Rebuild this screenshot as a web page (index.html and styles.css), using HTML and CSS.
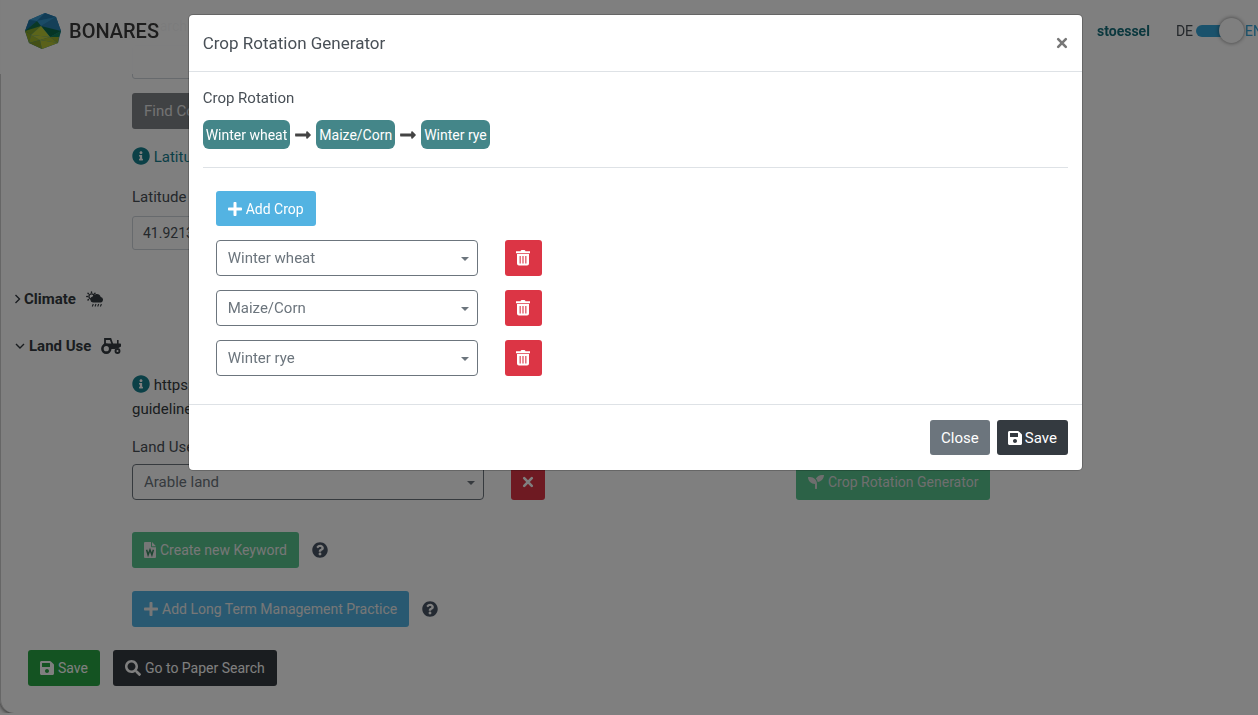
FILE: index.html
```
<!DOCTYPE html>
<html lang="en">
<head>
<meta charset="utf-8">
<title>BONARES - Crop Rotation Generator</title>
<link rel="stylesheet" href="styles.css">
</head>
<body>
<svg class="defs" aria-hidden="true">
  <symbol id="plus" viewBox="0 0 448 512"><path d="M416 208H272V64c0-17.67-14.33-32-32-32h-32c-17.67 0-32 14.33-32 32v144H32c-17.67 0-32 14.33-32 32v32c0 17.67 14.33 32 32 32h144v144c0 17.67 14.33 32 32 32h32c17.67 0 32-14.33 32-32V304h144c17.67 0 32-14.33 32-32v-32c0-17.67-14.33-32-32-32z"/></symbol>
  <symbol id="save" viewBox="0 0 448 512"><path d="M433.941 129.941l-83.882-83.882A48 48 0 0 0 316.118 32H48C21.49 32 0 53.49 0 80v352c0 26.51 21.49 48 48 48h352c26.51 0 48-21.49 48-48V163.882a48 48 0 0 0-14.059-33.941zM224 416c-35.346 0-64-28.654-64-64 0-35.346 28.654-64 64-64s64 28.654 64 64c0 35.346-28.654 64-64 64zm96-304.52V212c0 6.627-5.373 12-12 12H76c-6.627 0-12-5.373-12-12V108c0-6.627 5.373-12 12-12h228.52c3.183 0 6.235 1.264 8.485 3.515l3.48 3.48A11.996 11.996 0 0 1 320 111.48z"/></symbol>
  <symbol id="search" viewBox="0 0 512 512"><path d="M505 442.7L405.3 343c-4.5-4.5-10.6-7-17-7H372c27.6-35.3 44-79.7 44-128C416 93.1 322.9 0 208 0S0 93.1 0 208s93.1 208 208 208c48.3 0 92.7-16.4 128-44v16.3c0 6.4 2.5 12.5 7 17l99.7 99.7c9.4 9.4 24.6 9.4 33.9 0l28.3-28.3c9.4-9.4 9.4-24.6.1-34zM208 336c-70.7 0-128-57.2-128-128 0-70.7 57.2-128 128-128 70.7 0 128 57.2 128 128 0 70.7-57.2 128-128 128z"/></symbol>
  <symbol id="info" viewBox="0 0 512 512"><path d="M256 8C119.043 8 8 119.083 8 256c0 136.997 111.043 248 248 248s248-111.003 248-248C504 119.083 392.957 8 256 8zm0 110c23.196 0 42 18.804 42 42s-18.804 42-42 42-42-18.804-42-42 18.804-42 42-42zm56 254c0 6.627-5.373 12-12 12h-88c-6.627 0-12-5.373-12-12v-24c0-6.627 5.373-12 12-12h12v-64h-12c-6.627 0-12-5.373-12-12v-24c0-6.627 5.373-12 12-12h64c6.627 0 12 5.373 12 12v100h12c6.627 0 12 5.373 12 12v24z"/></symbol>
  <symbol id="help" viewBox="0 0 512 512"><path d="M504 256c0 136.997-111.043 248-248 248S8 392.997 8 256C8 119.083 119.043 8 256 8s248 111.083 248 248zM262.655 90c-54.497 0-89.255 22.957-116.549 63.758-3.536 5.286-2.353 12.415 2.715 16.258l34.699 26.31c5.205 3.947 12.621 3.008 16.665-2.122 17.864-22.658 30.113-35.797 57.303-35.797 20.429 0 45.698 13.148 45.698 32.958 0 14.976-12.363 22.667-32.534 33.976C247.128 238.528 216 254.941 216 296v4c0 6.627 5.373 12 12 12h56c6.627 0 12-5.373 12-12v-1.333c0-28.462 83.186-29.647 83.186-106.667 0-58.002-60.165-102-116.531-102zM256 338c-25.365 0-46 20.635-46 46 0 25.364 20.635 46 46 46s46-20.636 46-46c0-25.365-20.635-46-46-46z"/></symbol>
  <symbol id="seedling" viewBox="0 0 512 512"><path d="M64 96H0c0 123.7 100.3 224 224 224v144c0 8.8 7.2 16 16 16h32c8.8 0 16-7.2 16-16V320C288 196.3 187.7 96 64 96zm384-64c-84.2 0-157.4 46.5-195.7 115.2 27.7 30.2 48.2 66.9 59 107.6C424 243.1 512 147.9 512 32h-64z"/></symbol>
  <symbol id="arrow" viewBox="0 0 448 512"><path d="M313.941 216H12c-6.627 0-12 5.373-12 12v56c0 6.627 5.373 12 12 12h301.941v46.059c0 21.382 25.851 32.09 40.971 16.971l86.059-86.059c9.373-9.373 9.373-24.569 0-33.941l-86.059-86.059c-15.119-15.119-40.971-4.411-40.971 16.971V216z"/></symbol>
  <symbol id="times" viewBox="0 0 12 12"><path d="M2.200 2.200l7.600 7.600M9.800 2.200L2.200 9.800" fill="none" stroke="currentColor" stroke-width="2.600" stroke-linecap="round"/></symbol>
  <symbol id="trash" viewBox="0 0 14 16"><path fill-rule="evenodd" d="M4.500 1.200Q4.700 0 6 0h2q1.300 0 1.500 1.200H14v2H0v-2zM1 4h12v9.500q0 2-2 2H3q-2 0-2-2zM3.600 6v7.500h1.100V6zM6.450 6v7.500h1.100V6zM9.300 6v7.500h1.100V6z"/></symbol>
  <symbol id="word" viewBox="0 0 12 16"><path d="M1 0h6v4.500q0 .8.800.8H12V15q0 1-1 1H1q-1 0-1-1V1q0-1 1-1zM8 0l4 4.200H8z"/><path class="word-mark" d="M2.600 7.800l1.500 5 1.900-5 1.900 5 1.500-5"/></symbol>
  <symbol id="caret" viewBox="0 0 8 4"><path d="M0 0h8L4 4z"/></symbol>
</svg>

<header class="topbar">
  <a class="brand" href="#">
    <svg class="brand-logo" viewBox="0 0 36 36" aria-hidden="true">
      <path fill="#2b87bd" d="M4 7L20 0l11 4 5 14-3 12-16 6-13-6-4-12z"/>
      <path fill="#3a9bd0" d="M4 7L20 0l-8 8z"/>
      <path fill="#2379ad" d="M20 0l11 4-19 4z"/>
      <path fill="#1f74a4" d="M4 7l8 1-12 10z"/>
      <path fill="#3496ca" d="M12 8l19-4-15 9z"/>
      <path fill="#2a80b0" d="M31 4l5 14-20-5z"/>
      <path fill="#15704c" d="M0 18l12-10 4 5-14 8z"/>
      <path fill="#0b6a4a" d="M16 13l20 5-11 6z"/>
      <path fill="#138058" d="M36 18l-2 6h-9z"/>
      <path fill="#83a52c" d="M0 18l16-5L6 22z"/>
      <path fill="#b9ca35" d="M16 13l9 11-19-2z"/>
      <path fill="#90a829" d="M0 18l6 4-2 8z"/>
      <path fill="#a3b82c" d="M6 22l9 5-11 3z"/>
      <path fill="#bdcb3c" d="M6 22l19 2-10 3z"/>
      <path fill="#88a02a" d="M4 30l11-3 2 9z"/>
      <path fill="#a9bb30" d="M15 27l10-3 8 6z"/>
      <path fill="#98ae2b" d="M25 24h9l-1 6z"/>
      <path fill="#b4c334" d="M15 27l18 3-16 6z"/>
    </svg>
    <span>BONARES</span>
  </a>
  <a class="user" href="#">stoessel</a>
  <label class="lang"><span>DE</span><input type="checkbox" role="switch" checked><span class="lang-on">EN</span></label>
</header>

<main class="panel">
  <form class="form">
    <div class="col location">
      <button class="btn ghost" type="button">Search Location</button>
      <input class="field place" type="text" aria-label="Location">
      <button class="btn find" type="button" disabled>Find Coordinates</button>
      <p class="hint teal"><svg class="i-info"><use href="#info"/></svg> Latitude and longitude</p>
      <label class="label" for="lat">Latitude (°)</label>
      <input class="field" id="lat" type="text" value="41.92134">
    </div>

    <h2 class="section climate">
      <svg class="chev-right" viewBox="0 0 6 10"><path d="M1 1l4 4-4 4"/></svg>Climate
      <svg class="i-weather" viewBox="0 0 18 16" aria-hidden="true">
        <circle cx="5.500" cy="5.500" r="2.600" fill="none" stroke="currentColor" stroke-width="1.300"/>
        <path fill="none" stroke="currentColor" stroke-width="1.500" stroke-linecap="round" d="M5.500 1v.6M2 2.300l.4.400M.8 5.500h.6M2 9l.4-.4M9 2.300l-.4.400"/>
        <path d="M7 11.500a3 3 0 0 1-.4-5.900 4.300 4.300 0 0 1 8.100.5 2.800 2.800 0 0 1 .5 5.400z"/>
        <path fill="none" stroke="currentColor" stroke-width="1.100" d="M7.300 13l-1 2.500M10 13l-1 2.500M12.700 13l-1 2.500M15.400 13l-1 2.500"/>
      </svg>
    </h2>
    <h2 class="section">
      <svg class="chev-down" viewBox="0 0 10 6"><path d="M1 1l4 4 4-4"/></svg>Land Use
      <svg class="i-tractor" viewBox="0 0 20 16" aria-hidden="true">
        <path fill="none" stroke="currentColor" stroke-width="1.800" d="M4 6V1h5.500l2 5.500"/>
        <path d="M3 5.500h13V2h1.600v3.500h1.600q.8 0 .8.800v2.200l-2.500 1.500L14 11h-4.500L7 7H2z"/>
        <circle cx="5.300" cy="10.700" r="3.900" fill="none" stroke="currentColor" stroke-width="2.600"/>
        <circle cx="16.500" cy="13" r="2" fill="none" stroke="currentColor" stroke-width="1.900"/>
      </svg>
    </h2>

    <div class="col">
      <p class="hint guide"><svg class="i-info"><use href="#info"/></svg> https://www.bonares.de<br>guidelines</p>
      <label class="label" for="landuse">Land Use</label>
      <div class="row">
        <div class="select wide"><select id="landuse"><option>Arable land</option></select><svg class="caret"><use href="#caret"/></svg></div>
        <button class="btn red remove" type="button" aria-label="Remove"><svg class="i-times"><use href="#times"/></svg></button>
        <button class="btn mint generator" type="button"><svg class="i-16"><use href="#seedling"/></svg>Crop Rotation Generator</button>
      </div>
      <div class="row keyword">
        <button class="btn mint" type="button"><svg class="i-word"><use href="#word"/></svg>Create new Keyword</button>
        <svg class="i-help"><use href="#help"/></svg>
      </div>
      <div class="row practice">
        <button class="btn sky" type="button"><svg class="i-14"><use href="#plus"/></svg>Add Long Term Management Practice</button>
        <svg class="i-help"><use href="#help"/></svg>
      </div>
    </div>
    <div class="actions">
      <button class="btn green" type="button"><svg class="i-14"><use href="#save"/></svg>Save</button>
      <button class="btn dark" type="button"><svg class="i-16"><use href="#search"/></svg>Go to Paper Search</button>
    </div>
  </form>
</main>

<div class="backdrop">
  <section class="modal" role="dialog" aria-modal="true" aria-labelledby="title">
    <div class="modal-head">
      <h1 id="title">Crop Rotation Generator</h1>
      <button class="close" type="button" aria-label="Close dialog"><svg class="i-times"><use href="#times"/></svg></button>
    </div>
    <div class="modal-body">
      <p class="caption">Crop Rotation</p>
      <div class="chain">
        <span class="pill">Winter wheat</span><svg class="i-arrow"><use href="#arrow"/></svg>
        <span class="pill">Maize/Corn</span><svg class="i-arrow"><use href="#arrow"/></svg>
        <span class="pill">Winter rye</span>
      </div>
      <hr>
      <div class="crops">
        <button class="btn sky" type="button"><svg class="i-14"><use href="#plus"/></svg>Add Crop</button>
        <div class="crop">
          <div class="select"><select aria-label="Crop 1"><option>Winter wheat</option></select><svg class="caret"><use href="#caret"/></svg></div>
          <button class="btn red" type="button" aria-label="Delete crop 1"><svg class="i-trash"><use href="#trash"/></svg></button>
        </div>
        <div class="crop">
          <div class="select"><select aria-label="Crop 2"><option>Maize/Corn</option></select><svg class="caret"><use href="#caret"/></svg></div>
          <button class="btn red" type="button" aria-label="Delete crop 2"><svg class="i-trash"><use href="#trash"/></svg></button>
        </div>
        <div class="crop">
          <div class="select"><select aria-label="Crop 3"><option>Winter rye</option></select><svg class="caret"><use href="#caret"/></svg></div>
          <button class="btn red" type="button" aria-label="Delete crop 3"><svg class="i-trash"><use href="#trash"/></svg></button>
        </div>
      </div>
    </div>
    <div class="modal-foot">
      <button class="btn gray" type="button">Close</button>
      <button class="btn dark" type="button"><svg class="i-14"><use href="#save"/></svg>Save</button>
    </div>
  </section>
</div>
</body>
</html>
```
FILE: styles.css
```
* { box-sizing: border-box; }
body {
  margin: 0;
  overflow: hidden;
  background: #fff;
  color: #495057;
  font: 15px/24px Roboto, "Liberation Sans", sans-serif;
}
svg { fill: currentColor; flex: none; }
p, h1, h2 { margin: 0; }
.defs { position: absolute; width: 0; height: 0; }

.i-14 { width: 14px; height: 16px; }
.i-16 { width: 16px; height: 16px; }
.i-word { width: 12px; height: 16px; }
.i-times { width: 12px; height: 12px; }
.i-trash { width: 14px; height: 16px; }
.i-arrow { width: 16px; height: 18px; color: #444; }
.i-help { width: 16px; height: 16px; color: #495464; }
.i-info { width: 18px; height: 18px; color: #17808f; vertical-align: -3px; }
.word-mark { fill: none; stroke: #3c8a63; stroke-width: 1.500; }

/* Top bar */
.topbar {
  position: fixed;
  z-index: 1;
  top: 0;
  left: 0;
  right: 0;
  height: 74px;
  padding: 0 0 13px 25px;
  display: flex;
  align-items: center;
  background: rgba(255, 255, 255, .96);
  white-space: nowrap;
}
.brand { display: flex; align-items: center; gap: 8px; color: #3a3a3a; font-size: 20px; font-weight: 500; text-decoration: none; }
.brand-logo { width: 36px; height: 36px; }
.user { margin-left: auto; color: #17707c; font-weight: 700; font-size: 14px; text-decoration: none; }
.lang { display: flex; align-items: center; margin: 0 -5px 0 26px; gap: 3px; font-size: 14px; }
.lang input { appearance: none; width: 46px; height: 12px; margin: 0; border-radius: 6px; background: #35a5d8; position: relative; }
.lang input::after {
  content: "";
  position: absolute;
  right: -2px;
  top: -7px;
  width: 25px;
  height: 25px;
  border-radius: 50%;
  background: #fff;
  box-shadow: 0 0 4px rgba(0, 0, 0, .5);
}
.lang-on { color: #35a5d8; }

/* Page panel */
.panel {
  border-left: 1px solid #ccc;
  border-bottom-left-radius: 14px;
  box-shadow: 0 1px 4px rgba(0, 0, 0, .7);
  padding: 9px 0 27px;
}
.col { margin-left: 131px; display: flex; flex-direction: column; align-items: flex-start; }
.btn {
  display: inline-flex;
  align-items: center;
  justify-content: center;
  gap: 4px;
  height: 36px;
  padding: 0 12px;
  border: 0;
  border-radius: 3px;
  color: #fff;
  font: inherit;
  font-size: 14px;
  white-space: nowrap;
}
.ghost { height: 33px; background: none; color: #495057; }
.field { width: 352px; height: 34px; padding: 0 10px; border: 1px solid #ced4da; border-radius: 3px; color: #495057; font: inherit; font-size: 14px; }
.place { margin: 3px 0 14px; }
.find { background: #808488; color: #e6e6e6; font-size: 15px; }
.hint { margin: 16px 0; }
.teal { color: #17808f; }
.label { line-height: 24px; margin-bottom: 7px; }
.section { display: flex; align-items: center; padding-left: 13px; color: #343a40; font-size: 15px; line-height: 24px; font-weight: 700; }
.section + .section { margin-top: 23px; }
.climate { margin-top: 37px; }
.section svg { margin-left: 10px; }
.section .chev-right, .section .chev-down { fill: none; stroke: currentColor; stroke-width: 1.400; margin: 0 3px 0 0; }
.chev-right { width: 7px; height: 10px; }
.section .chev-down { width: 10px; height: 6px; margin: 0 4px 0 1px; }
.i-weather { width: 18px; height: 16px; }
.i-tractor { width: 20px; height: 16px; }
.hint.guide { color: #343a40; margin: 15px 0 14px; }
.guide + .label { margin-bottom: 5px; }
.row { display: flex; align-items: center; gap: 13px; align-self: stretch; }
.select { position: relative; width: 262px; height: 36px; }
.select.wide { width: 352px; }
.select select {
  appearance: none;
  width: 100%;
  height: 100%;
  padding: 0 28px 0 11px;
  border: 1px solid #6c757d;
  border-radius: 4px;
  background: none;
  color: #6c757d;
  font: inherit;
}
.caret { position: absolute; right: 9px; top: 17px; width: 8px; height: 4px; color: #6c757d; }
.remove { width: 34px; margin-left: 14px; }
.generator { margin-left: 238px; }
.keyword { margin-top: 32px; }
.practice { margin-top: 23px; }
.keyword .btn, .practice .btn, .generator { color: #eee; }
.generator { color: #ddd; }
.actions { display: flex; gap: 13px; padding: 23px 27px 0; }
.red { background: #dc3545; }
.mint { background: #58c48f; }
.sky { background: #53b3e2; }
.green { background: #28a745; }
.dark { background: #343a40; }
.gray { background: #6c757d; }

/* Dialog */
.backdrop { position: fixed; z-index: 2; inset: 0; background: rgba(0, 0, 0, .5); }
.modal { width: 71%; margin: 15px 0 0 15%; background: #fff; border-radius: 4px; box-shadow: 0 0 0 1px rgba(0, 0, 0, .2); }
.modal-head { display: flex; align-items: center; justify-content: space-between; padding: 16px 14px; border-bottom: 1px solid #dee2e6; }
.modal-head h1 { font-size: 17px; line-height: 24px; font-weight: 400; }
.close { display: flex; padding: 0; border: 0; background: none; color: #777; }
.modal-body { padding: 14px 14px 28px; }
.chain { display: flex; align-items: center; gap: 5px; margin-top: 10px; }
.pill { padding: 3px 3px 2px; border-radius: 6px; background: #448689; color: #fff; font-size: 14px; }
hr { margin: 18px 0 23px; border: 0; border-top: 1px solid #dee2e6; }
.crops { display: flex; flex-direction: column; align-items: flex-start; gap: 14px; padding-left: 13px; }
.crop { display: flex; gap: 27px; }
.crop .btn { width: 37px; }
.crops > .btn { height: 35px; }
.modal-foot { display: flex; justify-content: flex-end; gap: 7px; padding: 15px 14px; border-top: 1px solid #dee2e6; }
.modal-foot .btn { height: 35px; font-size: 15px; padding: 0 11px; gap: 3px; }
```
